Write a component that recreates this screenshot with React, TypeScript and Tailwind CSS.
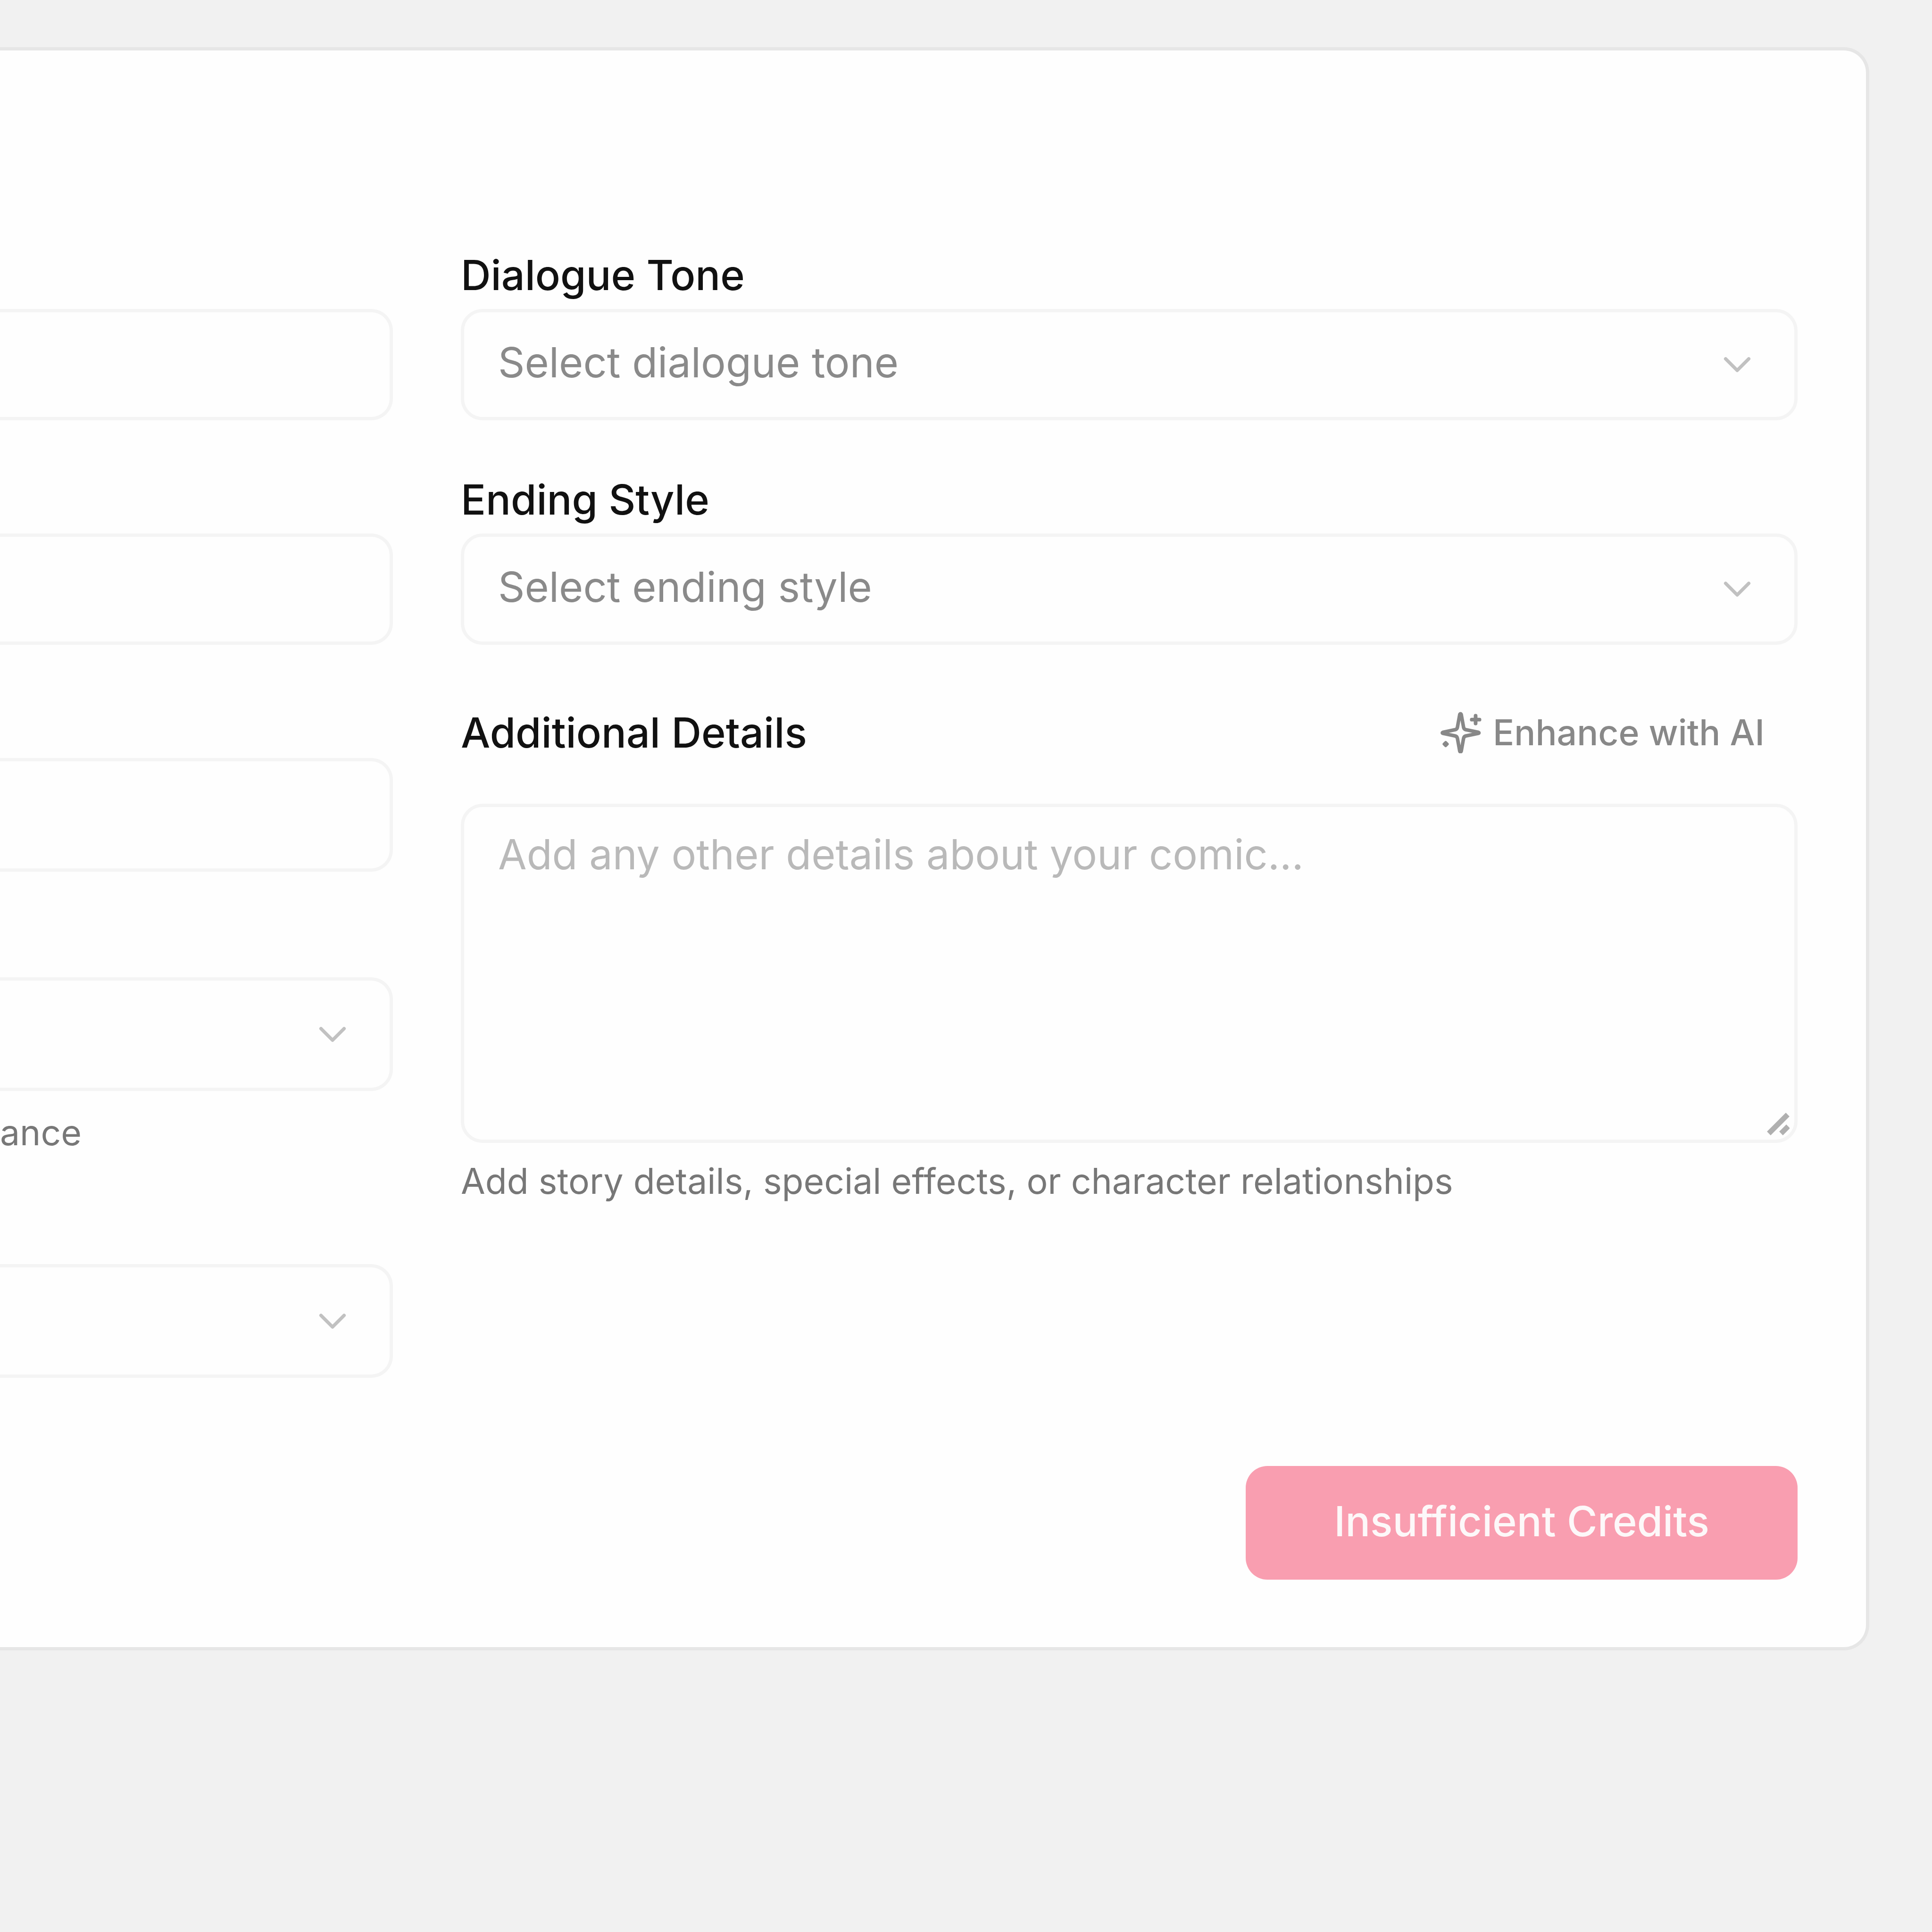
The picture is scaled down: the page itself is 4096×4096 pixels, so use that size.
import { useId, type ReactNode } from "react";
import { ChevronDown } from "lucide-react";

const FIELD =
  "w-full rounded-[46px] border-[7px] border-[#f4f4f4] bg-[#fefefe] px-[72px] text-[88px] leading-[132px] outline-none";

export default function App() {
  return (
    <main className="min-h-screen bg-[#f1f1f1] pt-[100px] pr-[133px] font-['Inter',sans-serif] text-[#111111]">
      <form className="rounded-r-[54px] border-[7px] border-l-0 border-[#e6e6e6] bg-[#fefefe] pr-[145px] pb-[143px]">
        <div className="grid grid-cols-[833fr_2834fr] gap-x-[144px]">
          <LeftColumn />
          <RightColumn />
        </div>
        <div className="mt-[187px] flex justify-end">
          <button
            type="button"
            className="h-[241px] w-[1170px] rounded-[46px] bg-[#f99eb0] pb-[8px] text-[88px] leading-[132px] font-medium text-[#fdf8f9]"
          >
            Insufficient Credits
          </button>
        </div>
      </form>
    </main>
  );
}

// Only the right-hand end of this column is in view, so its fields are open on the left.
function LeftColumn() {
  return (
    <div className="pt-[548px]">
      <input aria-label="Title" className={`${FIELD} h-[236px] rounded-l-none border-l-0`} />
      <input aria-label="Genre" className={`${FIELD} mt-[240px] h-[236px] rounded-l-none border-l-0`} />
      <input aria-label="Setting" className={`${FIELD} mt-[240px] h-[241px] rounded-l-none border-l-0`} />
      <div className="mt-[224px]">
        <Select ariaLabel="Characters" open />
      </div>
      <p className="mt-[32px] text-[75px] leading-[112px] text-[#777777]">ance</p>
      <div className="mt-[223px]">
        <Select ariaLabel="Length" open />
      </div>
    </div>
  );
}

function RightColumn() {
  const detailsId = useId();
  return (
    <div className="pt-[410px]">
      <Field label="Dialogue Tone" placeholder="Select dialogue tone" />
      <div className="mt-[102px]">
        <Field label="Ending Style" placeholder="Select ending style" />
      </div>
      <div className="mt-[120px] flex items-center justify-between pr-[70px]">
        <Label htmlFor={detailsId}>Additional Details</Label>
        <button type="button" className="flex items-center gap-[24px] text-[75px] leading-[132px] font-medium text-[#888888]">
          <SparkleIcon />
          Enhance with AI
        </button>
      </div>
      <div className="relative mt-[85px]">
        <textarea
          id={detailsId}
          placeholder="Add any other details about your comic..."
          className={`${FIELD} block h-[719px] resize-none pt-[34px] placeholder:text-[#b9b9b9]`}
        />
        <ResizeGrip />
      </div>
      <p className="mt-[25px] text-[75px] leading-[112px] text-[#777777]">
        Add story details, special effects, or character relationships
      </p>
    </div>
  );
}

function Label({ htmlFor, children }: { htmlFor: string; children: ReactNode }) {
  return (
    <label htmlFor={htmlFor} className="block text-[88px] leading-[132px] font-medium">
      {children}
    </label>
  );
}

function Field({ label, placeholder }: { label: string; placeholder: string }) {
  const id = useId();
  return (
    <div>
      <Label htmlFor={id}>{label}</Label>
      <div className="mt-[6px]">
        <Select id={id} placeholder={placeholder} />
      </div>
    </div>
  );
}

type SelectProps = { id?: string; ariaLabel?: string; placeholder?: string; open?: boolean };

function Select({ id, ariaLabel, placeholder = "", open }: SelectProps) {
  return (
    <div className="grid items-center">
      <select
        id={id}
        aria-label={ariaLabel}
        className={`${FIELD} col-start-1 row-start-1 appearance-none pb-[10px] text-[#8a8a8a] ${
          open ? "h-[241px] rounded-l-none border-l-0" : "h-[236px]"
        }`}
      >
        <option>{placeholder}</option>
      </select>
      <ChevronDown
        aria-hidden
        strokeWidth={1.75}
        className="pointer-events-none col-start-1 row-start-1 mr-[79px] size-[98px] justify-self-end text-[#c1c1c1]"
      />
    </div>
  );
}

function SparkleIcon() {
  return (
    <svg aria-hidden viewBox="65 50 280 280" className="size-[88px]" fill="none" stroke="currentColor" strokeLinejoin="round" strokeLinecap="round">
      <path
        d="M198 68 L182 156 Q179 168 167 171 L85 188 Q76 192 85 196 L167 213 Q179 216 182 228 L198 316 Q203 325 208 316 L224 228 Q227 216 239 213 L323 196 Q332 192 323 188 L239 171 Q227 168 224 156 L208 68 Q203 59 198 68Z"
        strokeWidth="24"
      />
      <path d="M305 77v52M279 103h52" strokeWidth="25" />
      <path d="M103 256l12 12-12 12-12-12z" fill="currentColor" strokeWidth="18" />
    </svg>
  );
}

function ResizeGrip() {
  return (
    <svg aria-hidden viewBox="0 0 48 48" className="pointer-events-none absolute right-[17px] bottom-[16px] size-[48px] text-[#b0b0b0]" stroke="currentColor" strokeWidth="11">
      <path d="M4 44L44 4M30 44L45 29" />
    </svg>
  );
}
